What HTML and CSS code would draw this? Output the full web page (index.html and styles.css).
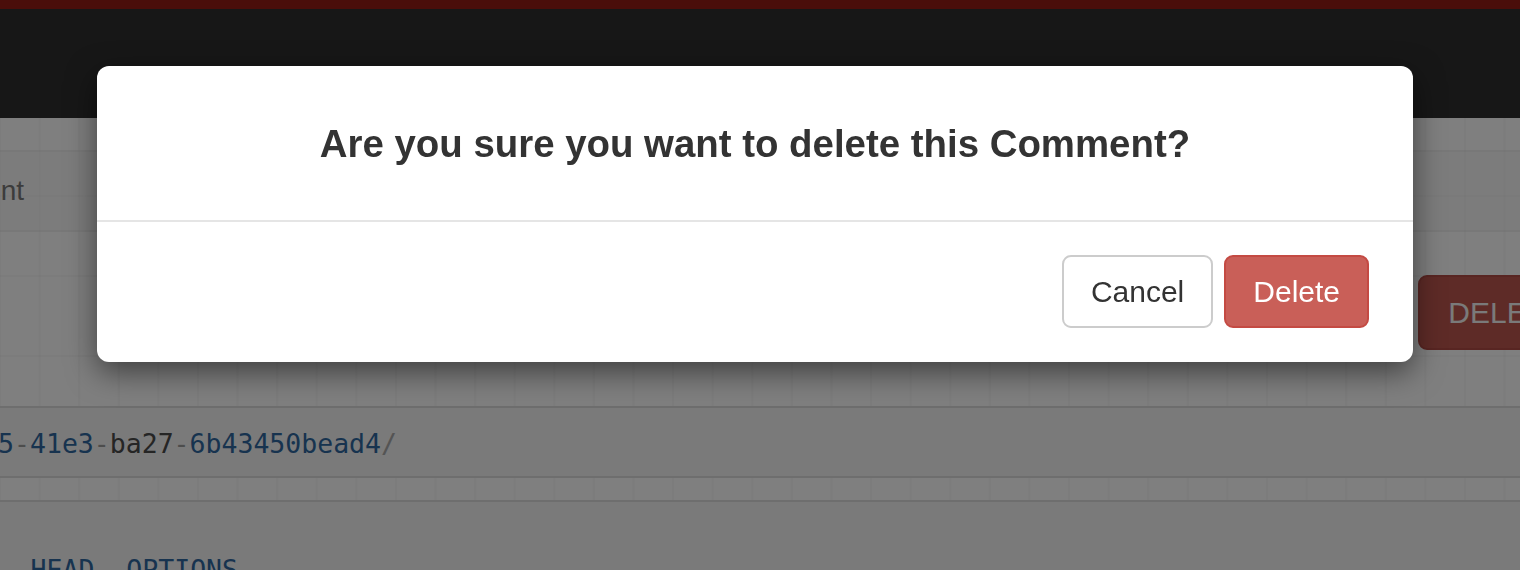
FILE: index.html
```html
<!DOCTYPE html>
<html lang="en">
<head>
<meta charset="utf-8">
<title>Comment Instance</title>
<link rel="stylesheet" href="styles.css">
</head>
<body>
<div class="topbar"></div>
<nav class="navbar"></nav>
<main class="content">
  <div class="breadcrumb">
    <div class="crumb-end"><span class="crumb">Api Root / Comment List / Comment</span></div>
  </div>
  <div class="actions">
    <button class="btn-page-delete" type="button">DELETE</button>
  </div>
  <div class="request-info">
    <div class="mono-end req-end"><span class="code"><span class="kw">DELETE</span> <span class="pl">/api/comments/e1b4f2a0</span><span class="pu">-</span><span class="lit">8c35</span><span class="pu">-</span><span class="lit">41e3</span><span class="pu">-</span><span class="pl">ba27</span><span class="pu">-</span><span class="lit">6b43450bead4</span><span class="sl">/</span></span></div>
  </div>
  <div class="response-info">
    <div class="mono-end resp-end"><span class="code"><span class="lit">Allow: GET, PUT, PATCH, DELETE, HEAD</span><span class="pu">,</span> <span class="lit">OPTIONS</span></span></div>
  </div>
</main>

<div class="backdrop"></div>
<div class="modal" role="dialog">
  <div class="modal-header">
    <h4 class="modal-title">Are you sure you want to delete this Comment?</h4>
  </div>
  <div class="modal-footer">
    <button class="btn btn-default" type="button">Cancel</button>
    <button class="btn btn-danger" type="button">Delete</button>
  </div>
</div>
</body>
</html>
```
FILE: styles.css
```css
html, body {
  margin: 0;
  padding: 0;
}

body {
  width: 1520px;
  height: 570px;
  overflow: hidden;
  position: relative;
  background: #ffffff;
  font-family: "Liberation Sans", Arial, Helvetica, sans-serif;
}

.topbar {
  height: 9px;
  background: #941c14;
}

.navbar {
  height: 109px;
  background: #2e2e2e;
}

.content {
  height: 452px;
  background-color: #fefefe;
  background-image:
    linear-gradient(to right, rgba(0, 0, 0, 0.022) 2px, transparent 2px),
    linear-gradient(to bottom, rgba(0, 0, 0, 0.022) 2px, transparent 2px);
  background-size: 39.6px 80px;
  background-position: -1px -3px;
  padding-top: 32px;
  box-sizing: border-box;
  overflow: hidden;
}

.breadcrumb {
  height: 82px;
  box-sizing: border-box;
  border-top: 2px solid rgba(0, 0, 0, 0.03);
  border-bottom: 2px solid rgba(0, 0, 0, 0.03);
  background: rgba(240, 240, 240, 0.3);
  display: flex;
  align-items: center;
}

.crumb-end {
  width: 24px;
  display: flex;
  justify-content: flex-end;
  white-space: nowrap;
}

.crumb {
  font-size: 28px;
  color: #787878;
  line-height: 40px;
}

.actions {
  height: 174px;
  box-sizing: border-box;
  padding-top: 43px;
  display: flex;
  justify-content: flex-end;
}

.btn-page-delete {
  height: 75px;
  margin-right: -75px;
  padding: 0 28px;
  border: 2px solid #b04a44;
  border-radius: 9px;
  background: #bd564f;
  color: #f4f4f4;
  font-family: "Liberation Sans", Arial, sans-serif;
  font-size: 30px;
}

.request-info {
  height: 72px;
  box-sizing: border-box;
  border-top: 2px solid #dcdcdc;
  border-bottom: 2px solid #dcdcdc;
  background: #f4f4f4;
  display: flex;
  align-items: center;
  padding-top: 3px;
}

.response-info {
  margin-top: 22px;
  height: 80px;
  box-sizing: border-box;
  border-top: 2px solid #dcdcdc;
  background: #f4f4f4;
  padding-top: 49px;
}

.mono-end {
  display: flex;
  justify-content: flex-end;
  white-space: nowrap;
}

.req-end {
  width: 397px;
}

.resp-end {
  width: 238px;
}

.code {
  font-family: "DejaVu Sans Mono", "Liberation Mono", monospace;
  font-size: 26.5px;
  line-height: 38px;
}

.kw {
  font-weight: bold;
  color: #333333;
}

.pl {
  color: #4a4a4a;
}

.lit {
  color: #2f679e;
}

.pu {
  color: #9a9a9a;
}

.sl {
  color: #a8a8a8;
}

.backdrop {
  position: fixed;
  inset: 0;
  background: rgba(0, 0, 0, 0.5);
}

.modal {
  position: absolute;
  left: 97px;
  top: 66px;
  width: 1316px;
  height: 296px;
  background: #ffffff;
  border-radius: 12px;
  box-shadow: 0 10px 30px rgba(0, 0, 0, 0.5);
  display: flex;
  flex-direction: column;
}

.modal-header {
  height: 156px;
  box-sizing: border-box;
  border-bottom: 2px solid #e5e5e5;
  display: flex;
  align-items: center;
  justify-content: center;
}

.modal-title {
  margin: 0;
  font-size: 38.4px;
  font-weight: bold;
  color: #333333;
  line-height: 44px;
  padding-top: 2px;
}

.modal-footer {
  flex: 1;
  display: flex;
  justify-content: flex-end;
  align-items: flex-start;
  gap: 11px;
  padding: 33px 44px 0 0;
}

.btn {
  height: 73px;
  padding: 0 27px;
  border-radius: 9px;
  font-family: "Liberation Sans", Arial, sans-serif;
  font-size: 30px;
  line-height: 1;
  cursor: pointer;
}

.btn-default {
  background: #ffffff;
  border: 2px solid #cccccc;
  color: #333333;
}

.btn-danger {
  background: #c95f58;
  border: 2px solid #c44a43;
  color: #ffffff;
}
```
